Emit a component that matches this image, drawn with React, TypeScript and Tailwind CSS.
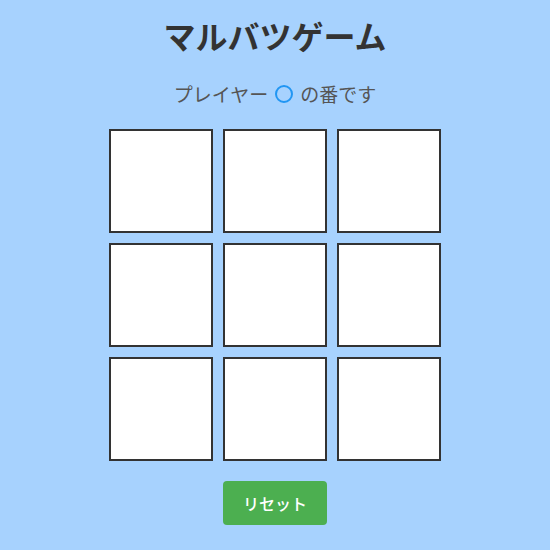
import { useState } from 'react'

const font = { fontFamily: '"Noto Sans CJK JP", "Noto Sans", sans-serif' }

export default function App() {
  const [board, setBoard] = useState<(string | null)[]>(Array(9).fill(null))
  const [turn, setTurn] = useState<'○' | '×'>('○')

  const play = (i: number) => {
    if (board[i]) return
    const next = [...board]
    next[i] = turn
    setBoard(next)
    setTurn(turn === '○' ? '×' : '○')
  }

  const reset = () => {
    setBoard(Array(9).fill(null))
    setTurn('○')
  }

  return (
    <div className="min-h-screen w-full bg-[#a7d2fe] flex flex-col items-center" style={font}>
      <h1 className="mt-[15px] text-[32px] leading-[40px] font-bold text-[#333]">マルバツゲーム</h1>

      <p className="mt-[25px] h-[28px] flex items-center text-[19px] text-[#555]">
        <span>プレイヤー</span>
        <span className="mx-[7px] w-[18px] h-[18px] rounded-full border-2 border-[#2196f3]" />
        <span>の番です</span>
      </p>

      <div className="mt-[21px] grid grid-cols-3 gap-[10px]">
        {board.map((cell, i) => (
          <button
            key={i}
            onClick={() => play(i)}
            className="w-[104px] h-[104px] bg-white border-2 border-[#333] text-5xl text-[#333] flex items-center justify-center"
          >
            {cell}
          </button>
        ))}
      </div>

      <button
        onClick={reset}
        className="mt-[20px] w-[104px] h-[44px] rounded bg-[#4caf50] text-white text-[16px] font-medium"
      >
        リセット
      </button>
    </div>
  )
}
